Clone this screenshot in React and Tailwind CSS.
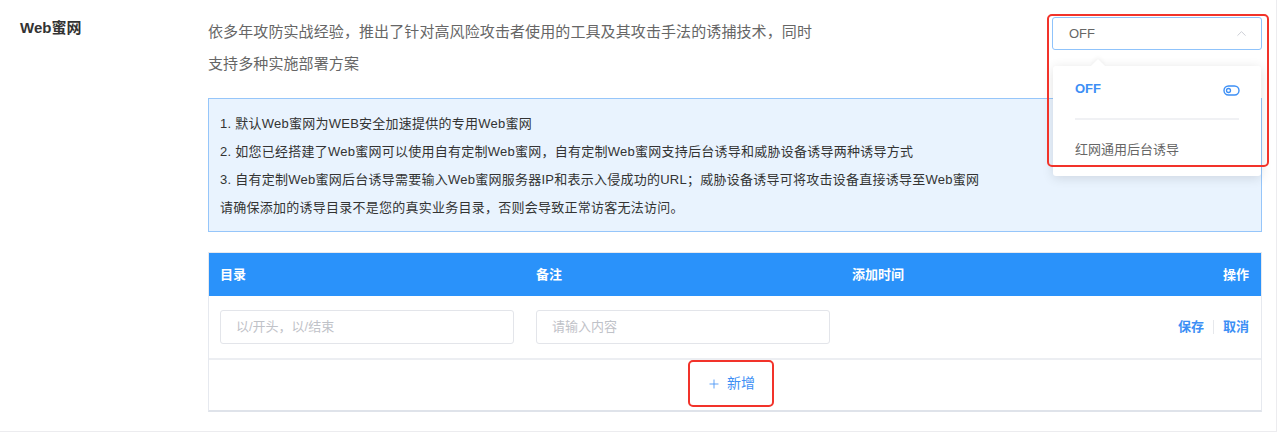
import { ChevronUp, Plus } from "lucide-react";

const FONT = {
  fontFamily: '"Liberation Sans", "Noto Sans CJK SC", sans-serif',
};

const notes = [
  "1. 默认Web蜜网为WEB安全加速提供的专用Web蜜网",
  "2. 如您已经搭建了Web蜜网可以使用自有定制Web蜜网，自有定制Web蜜网支持后台诱导和威胁设备诱导两种诱导方式",
  "3. 自有定制Web蜜网后台诱导需要输入Web蜜网服务器IP和表示入侵成功的URL；威胁设备诱导可将攻击设备直接诱导至Web蜜网",
  "请确保添加的诱导目录不是您的真实业务目录，否则会导致正常访客无法访问。",
];

const ToggleIcon = () => (
  <svg width="17" height="11" viewBox="0 0 17 11" fill="none">
    <rect x="1" y="1" width="15" height="9" rx="4.5" stroke="#3d8ff5" strokeWidth="1.4" />
    <circle cx="5.5" cy="5.5" r="2" stroke="#3d8ff5" strokeWidth="1.3" />
  </svg>
);

const ModeSelect = () => (
  <div className="relative w-[210px] h-[33px] mt-[1px] shrink-0">
    <div className="h-full flex items-center justify-between pl-4 pr-[12px] border border-[#8fc3fb] rounded-[3px] bg-white">
      <span className="text-[13px] text-[#666]">OFF</span>
      <ChevronUp size={15} strokeWidth={1.4} color="#c3c7cf" />
    </div>

    {/* dropdown */}
    <div className="absolute left-[1px] top-[49px] w-[208px] h-[110px] bg-white rounded-[3px] shadow-[0_2px_12px_rgba(0,0,0,0.12)] z-10">
      <div className="absolute left-[40px] -top-[5px] w-[10px] h-[10px] bg-white rotate-45 shadow-[-2px_-2px_4px_rgba(0,0,0,0.04)]" />
      <div className="relative px-[22px]">
        <div className="h-[46px] flex items-center justify-between">
          <span className="text-[13px] font-bold text-[#3d8ff5]">OFF</span>
          <span className="mr-[-1px] mt-[2px]">
            <ToggleIcon />
          </span>
        </div>
        <div className="h-[2px] bg-[#f0f1f4] mt-[6px]" />
        <div className="h-[60px] flex items-center text-[13px] text-[#666]">红网通用后台诱导</div>
      </div>
    </div>

    {/* highlight */}
    <div className="absolute -left-[5px] -top-[3px] w-[222px] h-[153px] border-2 border-[#f2332a] rounded-[5px] z-20 pointer-events-none" />
  </div>
);

export default function App() {
  return (
    <div className="w-[1277px] h-[432px] bg-white border-r border-b border-[#ececef] overflow-hidden" style={FONT}>
      <div className="flex">
        <div className="w-[208px] shrink-0 pl-5 pt-[18px] text-[15px] font-bold text-[#333] leading-5">Web蜜网</div>

        <div className="w-[1054px] pt-4">
          <div className="flex justify-between">
            <div className="text-[15px] leading-8 text-[#666] tracking-[0.1px]">
              <div>依多年攻防实战经验，推出了针对高风险攻击者使用的工具及其攻击手法的诱捕技术，同时</div>
              <div>支持多种实施部署方案</div>
            </div>
            <ModeSelect />
          </div>

          <div className="mt-[18px] h-[134px] border border-[#96c6fa] bg-[#e9f3fe] pl-[11px] py-[11px]">
            {notes.map((line) => (
              <div key={line} className="text-[13px] leading-[28px] text-[#333] tracking-[0.25px]">
                {line}
              </div>
            ))}
          </div>

          <div className="mt-5 border border-[#e6e9ef] border-b-2 border-b-[#dfe3ea]">
            <div className="grid grid-cols-[316px_316px_1fr_auto] items-center h-[43px] bg-[#2a92fa] px-[11px] text-[13px] font-bold text-white">
              <span>目录</span>
              <span>备注</span>
              <span>添加时间</span>
              <span className="pr-[1px]">操作</span>
            </div>

            <div className="grid grid-cols-[316px_316px_1fr_auto] items-center h-[64px] px-[11px] border-b-2 border-[#eceef2]">
              <div className="w-[294px] h-[34px] border border-[#e3e5ea] rounded-[3px] flex items-center pl-[15px] text-[13px] text-[#bfc2c8]">
                以/开头，以/结束
              </div>
              <div className="w-[294px] h-[34px] border border-[#e3e5ea] rounded-[3px] flex items-center pl-[15px] text-[13px] text-[#bfc2c8]">
                请输入内容
              </div>
              <span />
              <div className="flex items-center text-[13px] font-bold text-[#3d8ff5] pr-[1px]">
                <span>保存</span>
                <span className="mx-[9px] w-px h-[14px] bg-[#e6e8ec]" />
                <span>取消</span>
              </div>
            </div>

            <div className="h-[50px] flex justify-center">
              <div className="mr-2 w-[86px] h-[47px] border-2 border-[#f2332a] rounded-[5px] flex items-center justify-center gap-[6px] text-[14px] text-[#3d8ff5]">
                <Plus size={14} strokeWidth={1.4} />
                <span>新增</span>
              </div>
            </div>
          </div>
        </div>
      </div>
    </div>
  );
}
